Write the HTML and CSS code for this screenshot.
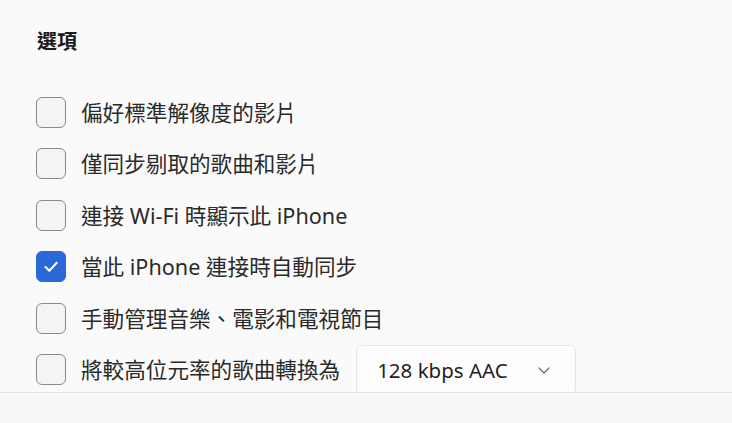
FILE: index.html
```html
<!DOCTYPE html>
<html lang="zh-Hant">
<head>
<meta charset="utf-8">
<title>選項</title>
<link rel="stylesheet" href="styles.css">
</head>
<body>
<div class="page">
  <main class="content">
    <h2 class="title">選項</h2>
    <ul class="options">
      <li class="row"><span class="box"></span><span class="label">偏好標準解像度的影片</span></li>
      <li class="row"><span class="box"></span><span class="label">僅同步剔取的歌曲和影片</span></li>
      <li class="row"><span class="box"></span><span class="label">連接 Wi-Fi 時顯示此 iPhone</span></li>
      <li class="row"><span class="box checked"><svg viewBox="0 0 30 31" width="30" height="31"><path d="M9.5 16 L13.3 19.8 L20.8 11.8" fill="none" stroke="#fff" stroke-width="2" stroke-linecap="round" stroke-linejoin="round"/></svg></span><span class="label">當此 iPhone 連接時自動同步</span></li>
      <li class="row"><span class="box"></span><span class="label">手動管理音樂、電影和電視節目</span></li>
      <li class="row"><span class="box"></span><span class="label">將較高位元率的歌曲轉換為</span>
        <span class="select"><span class="select-text">128 kbps AAC</span><svg class="chev" viewBox="0 0 12 7" width="12" height="7"><path d="M1 1 L6 6 L11 1" fill="none" stroke="#666" stroke-width="1.2" stroke-linecap="round" stroke-linejoin="round"/></svg></span>
      </li>
    </ul>
  </main>
  <footer class="footer"></footer>
</div>
</body>
</html>
```
FILE: styles.css
```css
html, body {
  margin: 0;
  padding: 0;
}
body {
  background: #fafafa;
  font-family: "Noto Sans", "Noto Sans CJK TC", sans-serif;
  color: #1f1f1f;
}
.page {
  width: 732px;
  height: 423px;
  display: flex;
  flex-direction: column;
  overflow: hidden;
}
.content {
  height: 392px;
  overflow: hidden;
  padding-left: 36px;
  box-sizing: border-box;
}
.title {
  margin: 0;
  padding-top: 28px;
  font-size: 20px;
  line-height: 28px;
  font-weight: 700;
  color: #1b1b1b;
  padding-left: 1px;
}
.options {
  list-style: none;
  margin: 41px 0 0 0;
  padding: 0;
  display: flex;
  flex-direction: column;
  gap: 20.4px;
}
.row {
  display: flex;
  align-items: center;
  height: 31px;
}
.box {
  width: 30px;
  height: 31px;
  box-sizing: border-box;
  border: 1.5px solid #8a8a8a;
  border-radius: 6px;
  background: #f4f4f4;
  flex: none;
  display: flex;
}
.box.checked {
  background: #2b68d8;
  border-color: #2b68d8;
}
.box.checked svg {
  margin: -1.5px;
}
.label {
  margin-left: 15px;
  font-size: 21.6px;
  line-height: 31px;
  color: #2a2a2a;
  white-space: nowrap;
}
.select {
  margin-left: 16px;
  width: 220px;
  height: 50px;
  flex: none;
  box-sizing: border-box;
  background: #fdfdfd;
  border: 1px solid #e6e6e6;
  border-radius: 6px;
  display: flex;
  align-items: center;
  justify-content: space-between;
  padding: 0 25px 0 20px;
  margin-top: 2px;
}
.select-text {
  font-size: 20.5px;
  color: #1f1f1f;
}
.chev {
  display: block;
}
.footer {
  flex: 1;
  border-top: 1px solid #e3e3e3;
  background: #f7f7f7;
}
```
